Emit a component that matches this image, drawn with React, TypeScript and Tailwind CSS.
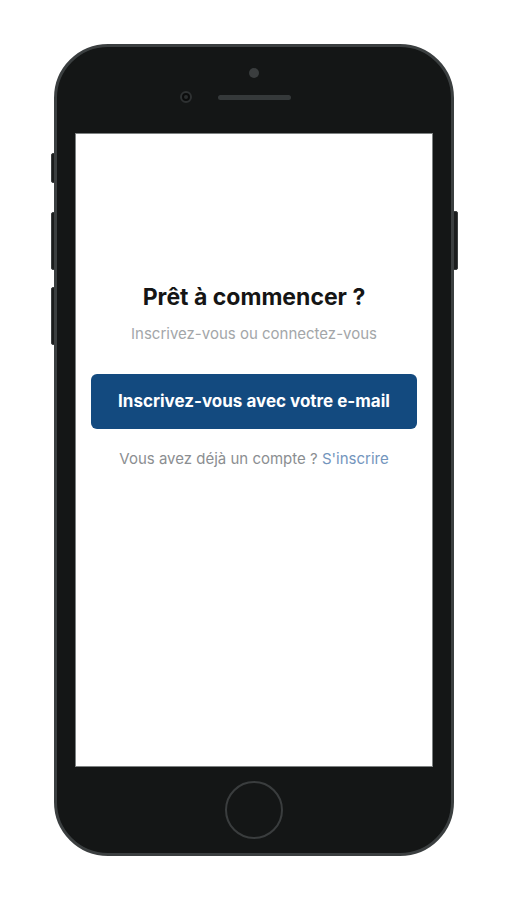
import React from "react";

export default function App() {
  return (
    <div className="w-[507px] h-[900px] bg-white relative" style={{ fontFamily: "Inter, 'Noto Sans', sans-serif" }}>
      <div className="pt-[44px] pl-[54px]">
        <div className="relative w-[400px] h-[812px]">
          {/* side buttons */}
          <div className="absolute left-[-3px] top-[109px] w-[4px] h-[30px] bg-[#1b1d1d] rounded-l-[2px] border border-[#3b3f40]" />
          <div className="absolute left-[-3px] top-[168px] w-[4px] h-[58px] bg-[#1b1d1d] rounded-l-[2px] border border-[#3b3f40]" />
          <div className="absolute left-[-3px] top-[243px] w-[4px] h-[58px] bg-[#1b1d1d] rounded-l-[2px] border border-[#3b3f40]" />
          <div className="absolute right-[-4px] top-[167px] w-[5px] h-[59px] bg-[#1b1d1d] rounded-r-[2px] border border-[#3b3f40]" />
          <div className="relative w-full h-full rounded-[54px] bg-[#141616] border-[3px] border-[#3b3f40] flex flex-col items-center">
            {/* top bezel */}
            <div className="h-[86px] w-full flex flex-col items-center pt-[21px]">
              <div className="w-[10px] h-[10px] rounded-full bg-[#3a3d3e]" />
              <div className="mt-[13px] flex items-center gap-[26px]">
                <div className="w-[12px] h-[12px] rounded-full border-2 border-[#2e3132] bg-[#0b0c0c] flex items-center justify-center">
                  <div className="w-[4px] h-[4px] rounded-full bg-[#2a2d2e]" />
                </div>
                <div className="w-[73px] h-[5px] rounded-full bg-[#35393a]" />
                <div className="w-[12px] h-[12px]" />
              </div>
            </div>
            {/* screen */}
            <div className="w-[358px] h-[634px] bg-white border border-[#7d8181] flex flex-col items-center pt-[148px] px-[15px]">
              <h1 className="text-[23px] leading-[30px] font-bold text-[#151515]">Prêt à commencer ?</h1>
              <p className="mt-[12px] text-[15px] leading-[20px] text-[#a3a6a9]">Inscrivez-vous ou connectez-vous</p>
              <button className="mt-[30px] w-[326px] h-[55px] rounded-[6px] bg-[#134a7f] text-white font-bold text-[17px]">
                Inscrivez-vous avec votre e-mail
              </button>
              <p className="mt-[20px] text-[15px] leading-[20px] text-[#8b8e91]">
                Vous avez déjà un compte ? <span className="text-[#7395bd]">S'inscrire</span>
              </p>
            </div>
            {/* bottom bezel */}
            <div className="flex-1 w-full flex justify-center pt-[14px]">
              <div className="w-[58px] h-[58px] rounded-full border-2 border-[#3a3d3e]" />
            </div>
          </div>
        </div>
      </div>
    </div>
  );
}
